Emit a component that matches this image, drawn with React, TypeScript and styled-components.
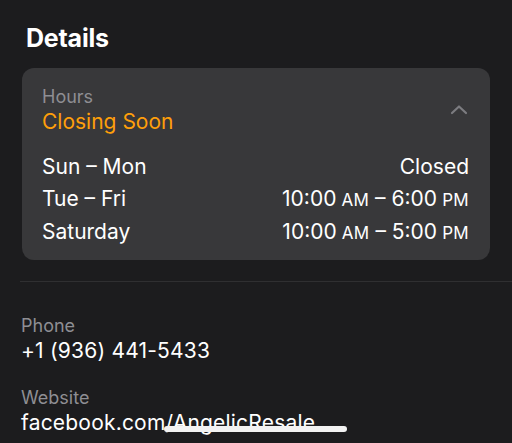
import styled, { createGlobalStyle } from 'styled-components'

const Global = createGlobalStyle`
    html, body {
        margin: 0;
        padding: 0;
        background: #1c1c1e;
    }
    body {
        font-family: Inter, "Noto Sans", sans-serif;
        -webkit-font-smoothing: antialiased;
    }
`;

const Screen = styled.div`
    position: relative;
    width: 512px;
    height: 443px;
    overflow: hidden;
    background: #1c1c1e;
    color: #fff;
    padding-top: 22px;
    box-sizing: border-box;
`;

const Title = styled.h2`
    margin: 0 0 14px 26px;
    font-size: 25px;
    line-height: 32px;
    font-weight: 700;
    letter-spacing: -0.2px;
`;

const Card = styled.section`
    margin: 0 22px;
    padding: 17px 21px 11px 20px;
    background: #38383a;
    border-radius: 12px;
`;

const CardHead = styled.div`
    display: flex;
    justify-content: space-between;
    align-items: flex-start;
    margin-bottom: 16px;
`;

const Label = styled.div`
    font-size: 18px;
    line-height: 24px;
    color: #8e8e93;
`;

const Status = styled.div`
    font-size: 21px;
    line-height: 26px;
    color: #ff9f0a;
`;

const Chevron = styled.svg`
    margin-top: 19px;
    margin-right: 1px;
`;

const Row = styled.div`
    display: flex;
    justify-content: space-between;
    font-size: 21px;
    line-height: 32px;
`;

const Small = styled.span`
    font-size: 17px;
    letter-spacing: 0.3px;
`;

const Divider = styled.hr`
    margin: 21px 0 0 20px;
    border: none;
    border-top: 1px solid #2f2f31;
`;

const Info = styled.div`
    padding: 32px 0 0 21px;
    display: flex;
    flex-direction: column;
    gap: 22px;
`;

const Value = styled.div`
    font-size: 21px;
    line-height: 26px;
    letter-spacing: 0.2px;
    color: #fff;
`;

const HomeBar = styled.div`
    position: absolute;
    left: 164px;
    top: 426px;
    width: 183px;
    height: 6px;
    border-radius: 3px;
    background: #f2f2f2;
`;

interface Hours {
    days: string,
    open?: [string, string],
}

const hours: Hours[] = [
    { days: 'Sun – Mon' },
    { days: 'Tue – Fri', open: ['10:00', '6:00'] },
    { days: 'Saturday', open: ['10:00', '5:00'] },
]

const App = () => {
    return (
    <Screen>
        <Global />
        <Title>Details</Title>
        <Card>
            <CardHead>
                <div>
                    <Label>Hours</Label>
                    <Status>Closing Soon</Status>
                </div>
                <Chevron width="18" height="11" viewBox="0 0 18 11">
                    <path d="M2 9 L9 2.5 L16 9" fill="none" stroke="#7c7c80" strokeWidth="2.2" strokeLinecap="round" strokeLinejoin="round" />
                </Chevron>
            </CardHead>
            {hours.map(h =>
                <Row key={h.days}>
                    <span>{h.days}</span>
                    {h.open ? (
                        <span>{h.open[0]}<Small> AM</Small> – {h.open[1]}<Small> PM</Small></span>
                    ) : (
                        <span>Closed</span>
                    )}
                </Row>
            )}
        </Card>
        <Divider />
        <Info>
            <div>
                <Label>Phone</Label>
                <Value>+1 (936) 441-5433</Value>
            </div>
            <div>
                <Label>Website</Label>
                <Value>facebook.com/AngelicResale</Value>
            </div>
        </Info>
        <HomeBar />
    </Screen>);
};

export default App;
